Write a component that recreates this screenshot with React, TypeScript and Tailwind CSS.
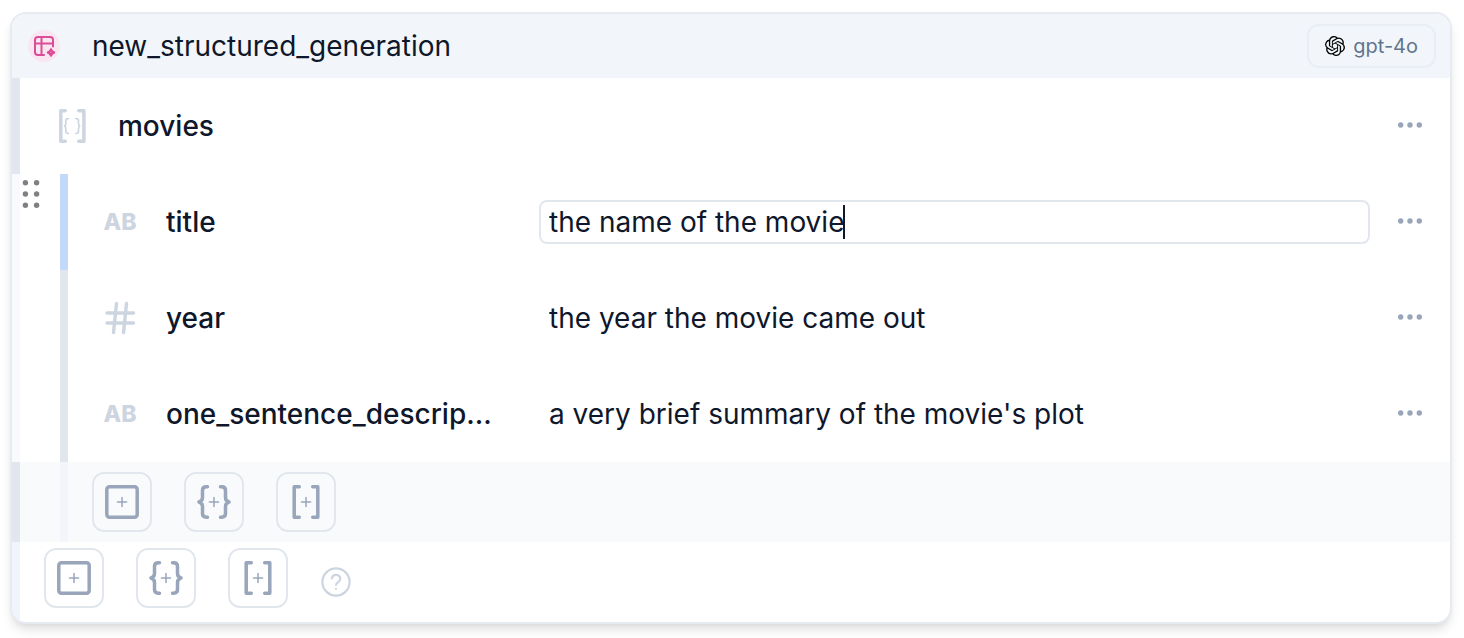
import React, { useLayoutEffect, useRef, useState } from "react";
import { SiOpenai } from "react-icons/si";

type FieldType = "string" | "number";

interface Field {
  id: string;
  name: string;
  type: FieldType;
  description: string;
}

const initialFields: Field[] = [
  { id: "title", name: "title", type: "string", description: "the name of the movie" },
  { id: "year", name: "year", type: "number", description: "the year the movie came out" },
  {
    id: "summary",
    name: "one_sentence_descrip...",
    type: "string",
    description: "a very brief summary of the movie's plot",
  },
];

const TableSparkIcon = () => (
  <svg width="24" height="24" viewBox="0 0 24 24" fill="none" stroke="currentColor" strokeWidth="2" strokeLinecap="round" strokeLinejoin="round">
    <path d="M12 21H6a3 3 0 0 1-3-3V6a3 3 0 0 1 3-3h12a3 3 0 0 1 3 3v6.500" />
    <path d="M3 9.500h18M9.500 3v18" />
    <path strokeWidth="2.500" d="M19 15.500c.500 2 1 2.500 3 3-2 .500-2.500 1-3 3-.500-2-1-2.500-3-3 2-.500 2.500-1 3-3z" />
  </svg>
);

const ObjectListIcon = () => (
  <svg width="32" height="34" viewBox="0 0 32 34" fill="none" stroke="currentColor" strokeLinecap="round" strokeLinejoin="round">
    <path strokeWidth="3.500" d="M9.300 1.800H4.800v30.400h4.500M22.700 1.800h5.200v30.400h-5.200" />
    <path strokeWidth="1.600" d="M12.500 9.500c-2.200 0-2.700.700-2.700 2.500v2.500c0 1.500-.300 2-1.300 2.500 1 .500 1.300 1 1.300 2.500V22c0 1.800.500 2.500 2.700 2.500" />
    <path strokeWidth="1.600" d="M19.800 9.500c2.200 0 2.700.700 2.700 2.500v2.500c0 1.500.300 2 1.300 2.500-1 .500-1.300 1-1.300 2.500V22c0 1.800-.500 2.500-2.700 2.500" />
  </svg>
);

const HashIcon = () => (
  <svg width="32" height="34" viewBox="0 0 32 34" fill="none" stroke="currentColor" strokeWidth="3.400" strokeLinecap="round">
    <path d="M3 12h26.500M3 22h26.500M12.500 2.500l-3 29M22.500 2.500l-3 29" />
  </svg>
);

const DotsIcon = () => (
  <svg width="24" height="24" viewBox="0 0 24 24" fill="currentColor">
    <circle cx="2.700" cy="11" r="2.700" />
    <circle cx="12" cy="11" r="2.700" />
    <circle cx="21.300" cy="11" r="2.700" />
  </svg>
);

const GripIcon = () => (
  <svg width="18" height="28" viewBox="0 0 18 28" fill="currentColor">
    {[2.8, 14, 25.2].map((cy) => (
      <React.Fragment key={cy}>
        <circle cx="3.400" cy={cy} r="2.700" />
        <circle cx="14.600" cy={cy} r="2.700" />
      </React.Fragment>
    ))}
  </svg>
);

const HelpIcon = () => (
  <svg width="30" height="30" viewBox="0 0 30 30" fill="none" stroke="currentColor" strokeWidth="2.200" strokeLinecap="round" strokeLinejoin="round">
    <circle cx="15" cy="15" r="13.600" />
    <path d="M10.800 11.300a4.300 4.300 0 0 1 8.500.700c0 2.800-4.300 3.600-4.300 5.800" />
    <path d="M15 21.800h.01" />
  </svg>
);

const addIcons = [
  {
    label: "Add field",
    shape: "M4.500 1.800h25a2.700 2.700 0 0 1 2.700 2.700v25a2.700 2.700 0 0 1-2.700 2.700h-25a2.700 2.700 0 0 1-2.700-2.700v-25a2.700 2.700 0 0 1 2.700-2.700z",
  },
  {
    label: "Add object",
    shape:
      "M10.500 1.800H9.500C6.500 1.800 5.500 3 5.500 5.500v7c0 2.500-1 3.800-3.500 4.500 2.500.700 3.500 2 3.500 4.500v7c0 2.500 1 3.700 4 3.700h1M23.500 1.800h1c3 0 4 1.200 4 3.700v7c0 2.500 1 3.800 3.500 4.500-2.500.700-3.500 2-3.500 4.500v7c0 2.500-1 3.700-4 3.700h-1",
  },
  { label: "Add list", shape: "M10.300 1.800H5.200v30.400h5.100M23.700 1.800h5.100v30.400h-5.100" },
];

const AddButtons = () => (
  <div className="flex gap-8">
    {addIcons.map((icon) => (
      <button
        key={icon.label}
        type="button"
        aria-label={icon.label}
        className="flex size-[60px] items-center justify-center rounded-xl border-2 border-[#e2e7ee] text-[#98a5ba]"
      >
        <svg width="34" height="34" viewBox="0 0 34 34" fill="none" stroke="currentColor" strokeLinecap="round" strokeLinejoin="round">
          <path strokeWidth="3.500" d={icon.shape} />
          <path strokeWidth="1.500" d="M17 12.500v9M12.500 17h9" />
        </svg>
      </button>
    ))}
  </div>
);

const MoreButton = ({ name }: { name: string }) => (
  <button type="button" aria-label={`More options for ${name}`} className="mx-7 shrink-0 text-[#98a5ba]">
    <DotsIcon />
  </button>
);

interface FieldRowProps {
  field: Field;
  active: boolean;
  onChange: (value: string) => void;
  onFocus: () => void;
}

const FieldRow = ({ field, active, onChange, onFocus }: FieldRowProps) => {
  const inputRef = useRef<HTMLInputElement>(null);
  const [caretLeft, setCaretLeft] = useState(0);

  // Keep the caret right behind the last character
  useLayoutEffect(() => {
    const input = inputRef.current;
    const ctx = document.createElement("canvas").getContext("2d");
    if (!input || !ctx) return;

    const style = getComputedStyle(input);
    ctx.font = `${style.fontWeight} ${style.fontSize} ${style.fontFamily}`;
    const inset = parseFloat(style.paddingLeft) + parseFloat(style.borderLeftWidth);
    setCaretLeft(Math.floor(inset + ctx.measureText(field.description).width) - 1);
  }, [field.description]);

  return (
    <div className="flex h-24 items-center">
      <div className="w-2 shrink-0 self-stretch bg-[#f9fafd]" />
      <div className="w-10 shrink-0 self-stretch pt-1.5 pl-0.5 text-[#808080]">
        {active && <GripIcon />}
      </div>
      <div className={`w-2 shrink-0 self-stretch ${active ? "bg-[#c2d9fa]" : "bg-[#e2e7ee]"}`} />
      <div className="ml-9 flex w-8 shrink-0 justify-center text-[#cdd5e0]">
        {field.type === "number" ? (
          <HashIcon />
        ) : (
          <span className="text-[23px] leading-8 font-extrabold">AB</span>
        )}
      </div>
      <label htmlFor={field.id} className="ml-[30px] w-[373px] shrink-0 font-medium">
        {field.name}
      </label>
      <div className="relative min-w-0 flex-1">
        <input
          ref={inputRef}
          id={field.id}
          type="text"
          value={field.description}
          onChange={(e) => onChange(e.target.value)}
          onFocus={onFocus}
          className={`block h-11 w-full rounded-lg border-2 bg-white px-2 caret-transparent outline-none ${
            active ? "border-[#e2e7ee]" : "border-transparent"
          }`}
        />
        {active && <span className="absolute top-[5px] h-[34px] w-0.5 bg-slate-900" style={{ left: caretLeft }} />}
      </div>
      <MoreButton name={field.name} />
    </div>
  );
};

const App = () => {
  const [fields, setFields] = useState(initialFields);
  const [activeId, setActiveId] = useState("title");

  const updateField = (id: string, description: string) => {
    setFields((prev) => prev.map((f) => (f.id === id ? { ...f, description } : f)));
  };

  return (
    <div className="bg-white pt-3 pr-3 pb-3.5 pl-2.5 font-['Inter',sans-serif] text-[28px] leading-9 text-slate-900">
      <div className="overflow-hidden rounded-2xl border-2 border-[#e6eaf1] bg-white shadow-[0_8px_12px_-2px_rgba(0,0,0,0.1),0_4px_8px_-4px_rgba(0,0,0,0.1)]">
        <header className="flex h-16 items-center bg-[#f2f6fa] pr-3.5 pl-4">
          <div className="flex size-8 shrink-0 items-center justify-center rounded-full bg-[#f9e6f0] text-[#db4d97]">
            <TableSparkIcon />
          </div>
          <h1 className="ml-8 flex-1">new_structured_generation</h1>
          <button
            type="button"
            className="flex h-11 items-center gap-2 rounded-xl border-2 border-[#e9eef5] px-4 text-xl text-slate-500"
          >
            <SiOpenai className="size-5 text-black" />
            gpt-4o
          </button>
        </header>

        <div className="flex h-24 items-center">
          <div className="w-2 shrink-0 self-stretch bg-[#e1e6ef]" />
          <div className="ml-9 w-8 shrink-0 text-[#cdd5e0]">
            <ObjectListIcon />
          </div>
          <h2 className="ml-[30px] flex-1 font-medium">movies</h2>
          <MoreButton name="movies" />
        </div>

        {fields.map((field) => (
          <FieldRow
            key={field.id}
            field={field}
            active={field.id === activeId}
            onChange={(value) => updateField(field.id, value)}
            onFocus={() => setActiveId(field.id)}
          />
        ))}

        <div className="flex h-20 items-center bg-[#f9fafc]">
          <div className="w-2 self-stretch bg-[#e1e6ef]" />
          <div className="ml-10 w-2 self-stretch bg-[#f2f6fa]" />
          <div className="ml-6">
            <AddButtons />
          </div>
        </div>

        <div className="flex h-20">
          <div className="w-2 bg-[#f0f5fb]" />
          <div className="ml-6 flex items-center self-start pt-1.5">
            <AddButtons />
            <button type="button" aria-label="Help" className="mt-2 ml-[33px] text-[#cdd5e0]">
              <HelpIcon />
            </button>
          </div>
        </div>
      </div>
    </div>
  );
};

export default App;
